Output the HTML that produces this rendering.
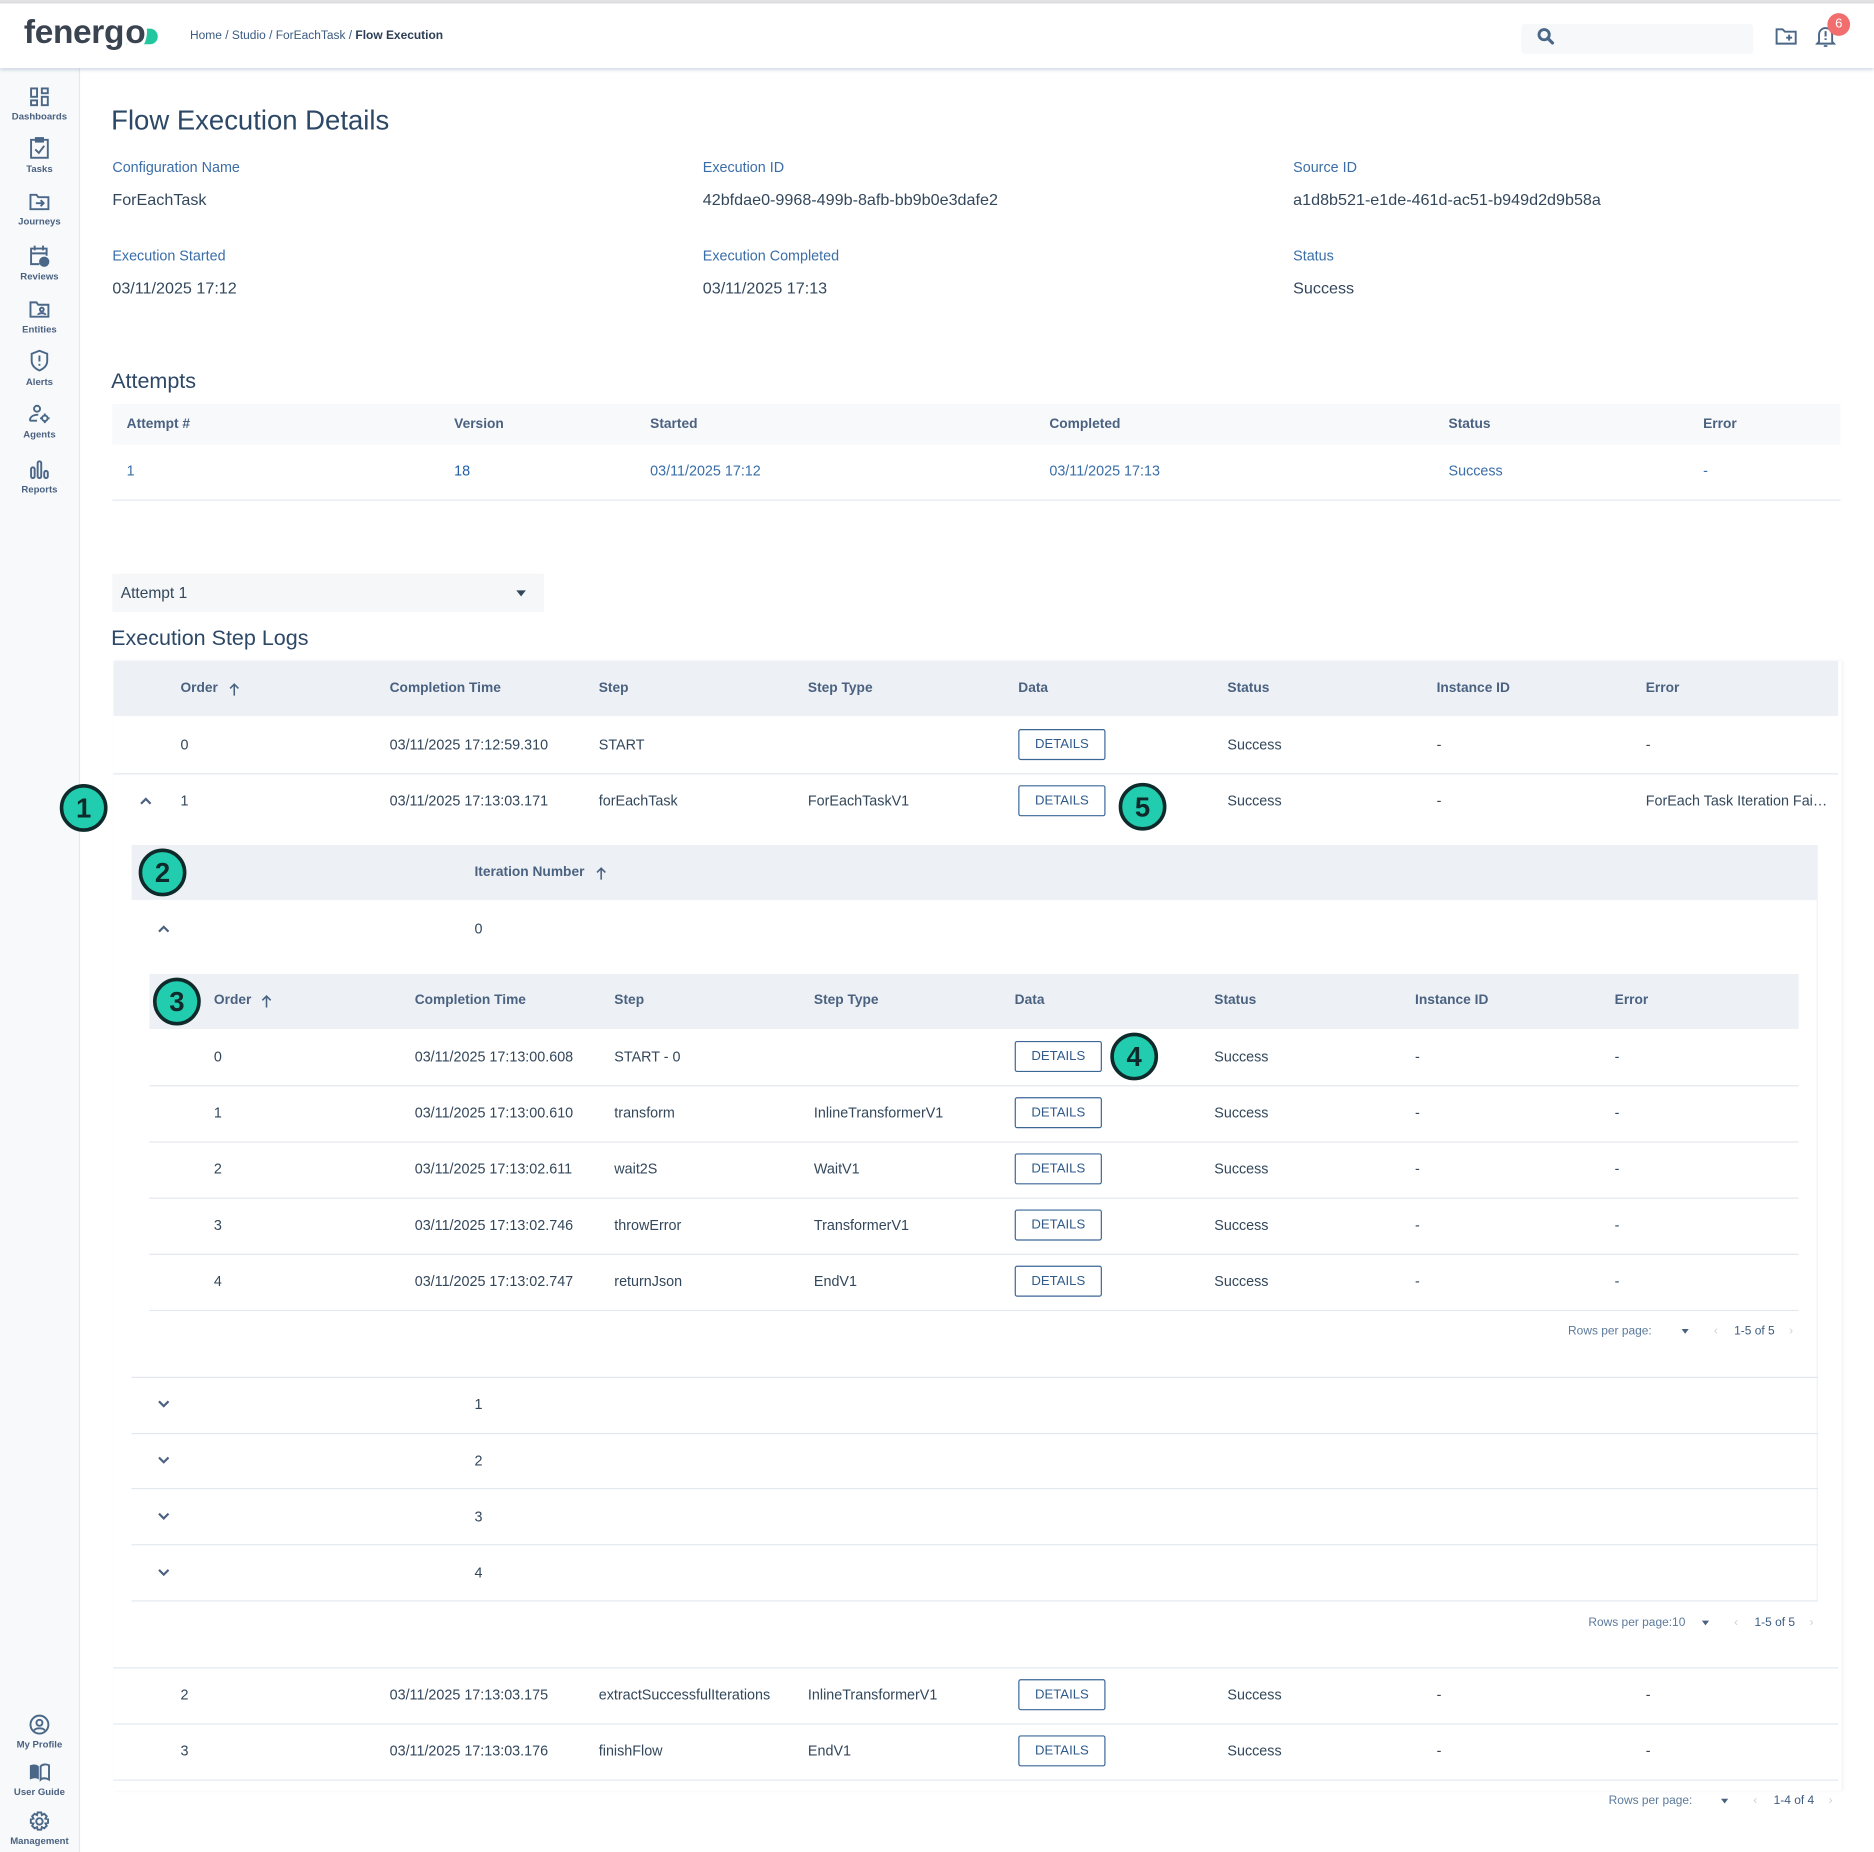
<!DOCTYPE html>
<html><head><meta charset="utf-8">
<style>
*{margin:0;padding:0;box-sizing:border-box}
html,body{width:1874px;height:1852px;overflow:hidden;background:#fff;font-family:"Liberation Sans",sans-serif;color:#33475b}
#w{position:absolute;left:0;top:0;width:1568px;height:1550px;transform:scale(1.19515);transform-origin:0 0}
.a{position:absolute}
.t{position:absolute;transform:translateY(-50%);white-space:nowrap;font-size:12px;color:#33475b}
.h{color:#4a6180;font-weight:bold;font-size:11.5px}
.l{color:#3a6ea8;font-size:12px}
.v{font-size:13.5px;color:#33475b}
.btn{position:absolute;width:73px;height:26px;border:1.5px solid #3b6797;border-radius:2px;font-size:11px;color:#2f5b8c;display:flex;align-items:center;justify-content:center;transform:translateY(-50%)}
.bd{position:absolute;height:1px;background:#e3e8ee}
.c{position:absolute;width:40px;height:40px;border-radius:50%;background:#22cdaf;border:3px solid #0e2a2a;font-weight:bold;font-size:23px;color:#0e2a2a;text-align:center;line-height:34px;transform:translate(-50%,-50%)}
.sb{position:absolute;left:0;width:66px;text-align:center;font-size:8px;font-weight:bold;color:#4a6180}
.sb svg{display:block;margin:0 auto 3px}
.pg{font-size:10px;color:#5c7a9c}
.ch{position:absolute;transform:translate(-50%,-50%)}
</style></head><body><div id="w">
<div class="a" style="left:0;top:0;width:1568px;height:3px;background:#e2e2e2"></div>
<div class="a" style="left:0;top:3px;width:1568px;height:54px;background:#fff;box-shadow:0 1px 3px rgba(90,120,160,.35);z-index:2">
 <div class="a" style="left:106px;top:21px;width:26px;height:13px;background:#22c79f;border-radius:0 7px 7px 0"></div>
 <div class="t" style="left:20px;top:24px;font-size:28px;font-weight:bold;color:#3a4350;letter-spacing:-0.3px">fenerg<span style="position:relative;background:#fff;border-radius:50%;padding:0 1px">o</span></div>
 <div class="t" style="left:159px;top:27px;font-size:10px;color:#3b5b80">Home / Studio / ForEachTask / <b style="color:#2c3e55">Flow Execution</b></div>
 <div class="a" style="left:1273px;top:17px;width:194px;height:25px;background:#f6f8fa;border-radius:3px"></div>
 <svg class="a" style="left:1286px;top:20px" width="15" height="15" viewBox="0 0 15 15"><circle cx="6" cy="6" r="4.3" fill="none" stroke="#4a6788" stroke-width="2.4"/><path d="M9 9l4 4" stroke="#4a6788" stroke-width="2.6" stroke-linecap="round"/></svg>
 <svg class="a" style="left:1485px;top:19px" width="19" height="16" viewBox="0 0 19 16"><path d="M1.5 2.5h5l2 2h9v10h-16z" fill="none" stroke="#4a6788" stroke-width="1.6"/><path d="M12 7v5M9.5 9.5h5" stroke="#4a6788" stroke-width="1.6"/></svg>
 <svg class="a" style="left:1519px;top:17px" width="17" height="20" viewBox="0 0 17 20"><path d="M3 15V9a5.5 5.5 0 0111 0v6l1.5 1.5h-14z" fill="none" stroke="#4a6788" stroke-width="1.6"/><path d="M8.5 6v4.5M8.5 12v1.5" stroke="#4a6788" stroke-width="1.7"/><path d="M7 18.5h3" stroke="#4a6788" stroke-width="1.5"/></svg>
 <div class="a" style="left:1529px;top:8px;width:19px;height:19px;border-radius:50%;background:#f26d6d;color:#fff;font-size:11px;text-align:center;line-height:19px">6</div>
</div>
<div class="a" style="left:0;top:57px;width:67px;height:1493px;background:#f7f9fb;border-right:1px solid #e4e9ef"></div>
<div class="sb" style="top:72px"><svg width="18" height="18" viewBox="0 0 18 18" fill="none" stroke="#4a6788" stroke-width="1.6"><rect x="2" y="2" width="5" height="7"/><rect x="11" y="2" width="5" height="4"/><rect x="2" y="12" width="5" height="4"/><rect x="11" y="9" width="5" height="7"/></svg>Dashboards</div>
<div class="sb" style="top:114px"><svg width="18" height="20" viewBox="0 0 18 20" fill="none" stroke="#4a6788" stroke-width="1.6"><rect x="2" y="3" width="14" height="15"/><rect x="6" y="1.5" width="6" height="3" fill="#4a6788"/><path d="M5.5 11l3 3 4.5-6"/></svg>Tasks</div>
<div class="sb" style="top:160px"><svg width="18" height="18" viewBox="0 0 18 18" fill="none" stroke="#4a6788" stroke-width="1.6"><path d="M1.5 3h5l1.5 2h8.5v10h-15z"/><path d="M6 10h6M10 7.5l2.5 2.5-2.5 2.5"/></svg>Journeys</div>
<div class="sb" style="top:204px"><svg width="18" height="20" viewBox="0 0 18 20" fill="none" stroke="#4a6788" stroke-width="1.6"><path d="M9 17H2V4h13v6M2 8h13M5 1.5v4M12 1.5v4"/><circle cx="13" cy="15" r="3.5" fill="#4a6788"/></svg>Reviews</div>
<div class="sb" style="top:250px"><svg width="18" height="18" viewBox="0 0 18 18" fill="none" stroke="#4a6788" stroke-width="1.6"><path d="M1.5 3h5l1.5 2h8.5v10h-15z"/><circle cx="11" cy="9" r="1.6"/><path d="M8 13.5c0-2 6-2 6 0"/></svg>Entities</div>
<div class="sb" style="top:292px"><svg width="18" height="20" viewBox="0 0 18 20" fill="none" stroke="#4a6788" stroke-width="1.6"><path d="M9 1.5l6.5 2.5v6c0 4-3 6.5-6.5 8-3.5-1.5-6.5-4-6.5-8V4z"/><path d="M9 5.5v5M9 12.5v1.5"/></svg>Alerts</div>
<div class="sb" style="top:338px"><svg width="20" height="18" viewBox="0 0 20 18" fill="none" stroke="#4a6788" stroke-width="1.6"><circle cx="8" cy="4" r="2.5"/><path d="M2 14c0-4 4-5 7-5M2 14h6"/><circle cx="14.5" cy="12" r="2.3"/><path d="M14.5 8v1.5M14.5 14.5V16M10.5 12H12M17 12h1.5"/></svg>Agents</div>
<div class="sb" style="top:384px"><svg width="18" height="18" viewBox="0 0 18 18" fill="none" stroke="#4a6788" stroke-width="1.6"><rect x="2" y="7" width="3" height="9" rx="1.5"/><rect x="7.5" y="2" width="3" height="14" rx="1.5"/><rect x="13" y="10" width="3" height="6" rx="1.5"/></svg>Reports</div>
<div class="sb" style="top:1434px"><svg width="18" height="18" viewBox="0 0 18 18" fill="none" stroke="#4a6788" stroke-width="1.6"><circle cx="9" cy="9" r="7.5"/><circle cx="9" cy="7.5" r="2.5"/><path d="M4.5 14c1-2.5 8-2.5 9 0"/></svg>My Profile</div>
<div class="sb" style="top:1474px"><svg width="18" height="18" viewBox="0 0 18 18"><path d="M1 3c3-1 6-1 7.5 1v11c-1.5-1.5-4.5-1.5-7.5 0z" fill="#4a6788"/><path d="M10 4c1.5-2 4.5-2 7-1v12c-2.5-1.5-5.5-1.5-7 0z" fill="none" stroke="#4a6788" stroke-width="1.6"/></svg>User Guide</div>
<div class="sb" style="top:1515px"><svg width="18" height="18" viewBox="0 0 18 18" fill="none" stroke="#4a6788" stroke-width="1.6"><circle cx="9" cy="9" r="2.7"/><path d="M7.5 1.5h3l.5 2.2 2-1.1 2.1 2.1-1.1 2 2.2.5v3l-2.2.5 1.1 2-2.1 2.1-2-1.1-.5 2.2h-3l-.5-2.2-2 1.1-2.1-2.1 1.1-2-2.2-.5v-3l2.2-.5-1.1-2 2.1-2.1 2 1.1z"/></svg>Management</div>

<div class="t" style="left:93px;top:101px;font-size:23px;color:#2c4866">Flow Execution Details</div>
<div class="t l" style="left:94px;top:140px">Configuration Name</div>
<div class="t v" style="left:94px;top:167px">ForEachTask</div>
<div class="t l" style="left:588px;top:140px">Execution ID</div>
<div class="t v" style="left:588px;top:167px">42bfdae0-9968-499b-8afb-bb9b0e3dafe2</div>
<div class="t l" style="left:1082px;top:140px">Source ID</div>
<div class="t v" style="left:1082px;top:167px">a1d8b521-e1de-461d-ac51-b949d2d9b58a</div>
<div class="t l" style="left:94px;top:214px">Execution Started</div>
<div class="t v" style="left:94px;top:241px">03/11/2025 17:12</div>
<div class="t l" style="left:588px;top:214px">Execution Completed</div>
<div class="t v" style="left:588px;top:241px">03/11/2025 17:13</div>
<div class="t l" style="left:1082px;top:214px">Status</div>
<div class="t v" style="left:1082px;top:241px">Success</div>

<div class="t" style="left:93px;top:319px;font-size:18px;color:#2c4866">Attempts</div>
<div class="a" style="left:94px;top:338px;width:1446px;height:34px;background:#f7f9fb"></div>
<div class="t h" style="left:106px;top:355px">Attempt #</div>
<div class="t h" style="left:380px;top:355px">Version</div>
<div class="t h" style="left:544px;top:355px">Started</div>
<div class="t h" style="left:878px;top:355px">Completed</div>
<div class="t h" style="left:1212px;top:355px">Status</div>
<div class="t h" style="left:1425px;top:355px">Error</div>
<div class="t l" style="left:106px;top:394px">1</div>
<div class="t" style="left:380px;top:394px;color:#1f5fa8">18</div>
<div class="t l" style="left:544px;top:394px">03/11/2025 17:12</div>
<div class="t l" style="left:878px;top:394px">03/11/2025 17:13</div>
<div class="t l" style="left:1212px;top:394px">Success</div>
<div class="t l" style="left:1425px;top:394px">-</div>
<div class="bd" style="left:94px;top:418px;width:1446px"></div>

<div class="a" style="left:94px;top:480px;width:361px;height:32px;background:#f5f7f9"></div>
<div class="t" style="left:101px;top:496px;font-size:13px">Attempt 1</div>
<div class="a" style="left:432px;top:494px;width:0;height:0;border-left:4px solid transparent;border-right:4px solid transparent;border-top:5px solid #33475b"></div>
<div class="t" style="left:93px;top:534px;font-size:18px;color:#2c4866">Execution Step Logs</div>

<div class="a" style="left:95px;top:553px;width:1446px;height:945px;box-shadow:1px 0 3px rgba(0,0,0,.06)"></div>
<div class="a" style="left:95px;top:553px;width:1443px;height:46px;background:#edf1f5"></div>
<div class="t h" style="left:151px;top:576px">Order</div><svg class="ch" style="left:196px;top:577px" width="10" height="12" viewBox="0 0 10 12" fill="none" stroke="#4a6180" stroke-width="1.3"><path d="M5 11V1.5M1.5 5L5 1.5 8.5 5"/></svg>
<div class="t h" style="left:326px;top:576px">Completion Time</div>
<div class="t h" style="left:501px;top:576px">Step</div>
<div class="t h" style="left:676px;top:576px">Step Type</div>
<div class="t h" style="left:852px;top:576px">Data</div>
<div class="t h" style="left:1027px;top:576px">Status</div>
<div class="t h" style="left:1202px;top:576px">Instance ID</div>
<div class="t h" style="left:1377px;top:576px">Error</div>
<div class="t" style="left:151px;top:623px">0</div>
<div class="t" style="left:326px;top:623px">03/11/2025 17:12:59.310</div>
<div class="t" style="left:501px;top:623px">START</div>
<div class="btn" style="left:852px;top:623px">DETAILS</div>
<div class="t" style="left:1027px;top:623px">Success</div>
<div class="t" style="left:1202px;top:623px">-</div>
<div class="t" style="left:1377px;top:623px">-</div>
<div class="bd" style="left:95px;top:647px;width:1443px"></div>
<svg class="ch" style="left:122px;top:670px" width="12" height="8" viewBox="0 0 12 8" fill="none" stroke="#4a6180" stroke-width="1.8"><path d="M2 6.5L6 2.5l4 4"/></svg>
<div class="t" style="left:151px;top:670px">1</div>
<div class="t" style="left:326px;top:670px">03/11/2025 17:13:03.171</div>
<div class="t" style="left:501px;top:670px">forEachTask</div>
<div class="t" style="left:676px;top:670px">ForEachTaskV1</div>
<div class="btn" style="left:852px;top:670px">DETAILS</div>
<div class="t" style="left:1027px;top:670px">Success</div>
<div class="t" style="left:1202px;top:670px">-</div>
<div class="t" style="left:1377px;top:670px;width:152px;overflow:hidden;text-overflow:ellipsis">ForEach Task Iteration Failed</div>

<div class="a" style="left:110px;top:707px;width:1411px;height:46px;background:#edf1f5"></div>
<div class="t h" style="left:397px;top:730px">Iteration Number</div><svg class="ch" style="left:503px;top:731px" width="10" height="12" viewBox="0 0 10 12" fill="none" stroke="#4a6180" stroke-width="1.3"><path d="M5 11V1.5M1.5 5L5 1.5 8.5 5"/></svg>
<svg class="ch" style="left:137px;top:777px" width="12" height="8" viewBox="0 0 12 8" fill="none" stroke="#4a6180" stroke-width="1.8"><path d="M2 6.5L6 2.5l4 4"/></svg>
<div class="t" style="left:397px;top:777px">0</div>
<div class="a" style="left:110px;top:753px;width:1411px;height:586px;border-right:1px solid #eef1f4"></div>

<div class="a" style="left:125px;top:815px;width:1380px;height:46px;background:#edf1f5"></div>
<div class="t h" style="left:179px;top:837px">Order</div><svg class="ch" style="left:223px;top:838px" width="10" height="12" viewBox="0 0 10 12" fill="none" stroke="#4a6180" stroke-width="1.3"><path d="M5 11V1.5M1.5 5L5 1.5 8.5 5"/></svg>
<div class="t h" style="left:347px;top:837px">Completion Time</div>
<div class="t h" style="left:514px;top:837px">Step</div>
<div class="t h" style="left:681px;top:837px">Step Type</div>
<div class="t h" style="left:849px;top:837px">Data</div>
<div class="t h" style="left:1016px;top:837px">Status</div>
<div class="t h" style="left:1184px;top:837px">Instance ID</div>
<div class="t h" style="left:1351px;top:837px">Error</div>

<div class="t" style="left:179px;top:884px">0</div><div class="t" style="left:347px;top:884px">03/11/2025 17:13:00.608</div><div class="t" style="left:514px;top:884px">START - 0</div><div class="btn" style="left:849px;top:884px">DETAILS</div><div class="t" style="left:1016px;top:884px">Success</div><div class="t" style="left:1184px;top:884px">-</div><div class="t" style="left:1351px;top:884px">-</div>
<div class="bd" style="left:125px;top:908px;width:1380px"></div>
<div class="t" style="left:179px;top:931px">1</div><div class="t" style="left:347px;top:931px">03/11/2025 17:13:00.610</div><div class="t" style="left:514px;top:931px">transform</div><div class="t" style="left:681px;top:931px">InlineTransformerV1</div><div class="btn" style="left:849px;top:931px">DETAILS</div><div class="t" style="left:1016px;top:931px">Success</div><div class="t" style="left:1184px;top:931px">-</div><div class="t" style="left:1351px;top:931px">-</div>
<div class="bd" style="left:125px;top:955px;width:1380px"></div>
<div class="t" style="left:179px;top:978px">2</div><div class="t" style="left:347px;top:978px">03/11/2025 17:13:02.611</div><div class="t" style="left:514px;top:978px">wait2S</div><div class="t" style="left:681px;top:978px">WaitV1</div><div class="btn" style="left:849px;top:978px">DETAILS</div><div class="t" style="left:1016px;top:978px">Success</div><div class="t" style="left:1184px;top:978px">-</div><div class="t" style="left:1351px;top:978px">-</div>
<div class="bd" style="left:125px;top:1002px;width:1380px"></div>
<div class="t" style="left:179px;top:1025px">3</div><div class="t" style="left:347px;top:1025px">03/11/2025 17:13:02.746</div><div class="t" style="left:514px;top:1025px">throwError</div><div class="t" style="left:681px;top:1025px">TransformerV1</div><div class="btn" style="left:849px;top:1025px">DETAILS</div><div class="t" style="left:1016px;top:1025px">Success</div><div class="t" style="left:1184px;top:1025px">-</div><div class="t" style="left:1351px;top:1025px">-</div>
<div class="bd" style="left:125px;top:1049px;width:1380px"></div>
<div class="t" style="left:179px;top:1072px">4</div><div class="t" style="left:347px;top:1072px">03/11/2025 17:13:02.747</div><div class="t" style="left:514px;top:1072px">returnJson</div><div class="t" style="left:681px;top:1072px">EndV1</div><div class="btn" style="left:849px;top:1072px">DETAILS</div><div class="t" style="left:1016px;top:1072px">Success</div><div class="t" style="left:1184px;top:1072px">-</div><div class="t" style="left:1351px;top:1072px">-</div>
<div class="bd" style="left:125px;top:1096px;width:1380px"></div>
<div class="t pg" style="left:1312px;top:1114px">Rows per page:</div>
<div class="a" style="left:1407px;top:1112px;border-left:3px solid transparent;border-right:3px solid transparent;border-top:4px solid #4a6180"></div>
<div class="t pg" style="left:1434px;top:1114px;color:#c8d2dc">&#8249;</div>
<div class="t pg" style="left:1451px;top:1114px;color:#3b5b80">1-5 of 5</div>
<div class="t pg" style="left:1497px;top:1114px;color:#c8d2dc">&#8250;</div>

<div class="bd" style="left:110px;top:1152px;width:1411px"></div>
<svg class="ch" style="left:137px;top:1175px" width="12" height="8" viewBox="0 0 12 8" fill="none" stroke="#4a6180" stroke-width="1.8"><path d="M2 1.5L6 5.5l4-4"/></svg><div class="t" style="left:397px;top:1175px">1</div>
<div class="bd" style="left:110px;top:1199px;width:1411px"></div>
<svg class="ch" style="left:137px;top:1222px" width="12" height="8" viewBox="0 0 12 8" fill="none" stroke="#4a6180" stroke-width="1.8"><path d="M2 1.5L6 5.5l4-4"/></svg><div class="t" style="left:397px;top:1222px">2</div>
<div class="bd" style="left:110px;top:1245px;width:1411px"></div>
<svg class="ch" style="left:137px;top:1269px" width="12" height="8" viewBox="0 0 12 8" fill="none" stroke="#4a6180" stroke-width="1.8"><path d="M2 1.5L6 5.5l4-4"/></svg><div class="t" style="left:397px;top:1269px">3</div>
<div class="bd" style="left:110px;top:1292px;width:1411px"></div>
<svg class="ch" style="left:137px;top:1316px" width="12" height="8" viewBox="0 0 12 8" fill="none" stroke="#4a6180" stroke-width="1.8"><path d="M2 1.5L6 5.5l4-4"/></svg><div class="t" style="left:397px;top:1316px">4</div>
<div class="bd" style="left:110px;top:1339px;width:1411px"></div>
<div class="t pg" style="left:1329px;top:1358px">Rows per page:10</div>
<div class="a" style="left:1424px;top:1356px;border-left:3px solid transparent;border-right:3px solid transparent;border-top:4px solid #4a6180"></div>
<div class="t pg" style="left:1451px;top:1358px;color:#c8d2dc">&#8249;</div>
<div class="t pg" style="left:1468px;top:1358px;color:#3b5b80">1-5 of 5</div>
<div class="t pg" style="left:1514px;top:1358px;color:#c8d2dc">&#8250;</div>

<div class="bd" style="left:95px;top:1395px;width:1443px"></div>
<div class="t" style="left:151px;top:1418px">2</div><div class="t" style="left:326px;top:1418px">03/11/2025 17:13:03.175</div><div class="t" style="left:501px;top:1418px">extractSuccessfulIterations</div><div class="t" style="left:676px;top:1418px">InlineTransformerV1</div><div class="btn" style="left:852px;top:1418px">DETAILS</div><div class="t" style="left:1027px;top:1418px">Success</div><div class="t" style="left:1202px;top:1418px">-</div><div class="t" style="left:1377px;top:1418px">-</div>
<div class="bd" style="left:95px;top:1442px;width:1443px"></div>
<div class="t" style="left:151px;top:1465px">3</div><div class="t" style="left:326px;top:1465px">03/11/2025 17:13:03.176</div><div class="t" style="left:501px;top:1465px">finishFlow</div><div class="t" style="left:676px;top:1465px">EndV1</div><div class="btn" style="left:852px;top:1465px">DETAILS</div><div class="t" style="left:1027px;top:1465px">Success</div><div class="t" style="left:1202px;top:1465px">-</div><div class="t" style="left:1377px;top:1465px">-</div>
<div class="bd" style="left:95px;top:1489px;width:1443px"></div>
<div class="t pg" style="left:1346px;top:1507px">Rows per page:</div>
<div class="a" style="left:1440px;top:1505px;border-left:3px solid transparent;border-right:3px solid transparent;border-top:4px solid #4a6180"></div>
<div class="t pg" style="left:1467px;top:1507px;color:#c8d2dc">&#8249;</div>
<div class="t pg" style="left:1484px;top:1507px;color:#3b5b80">1-4 of 4</div>
<div class="t pg" style="left:1530px;top:1507px;color:#c8d2dc">&#8250;</div>

<div class="c" style="left:70px;top:676px">1</div>
<div class="c" style="left:136px;top:730px">2</div>
<div class="c" style="left:148px;top:838px">3</div>
<div class="c" style="left:949px;top:884px">4</div>
<div class="c" style="left:956px;top:675px">5</div>
</div></body></html>
